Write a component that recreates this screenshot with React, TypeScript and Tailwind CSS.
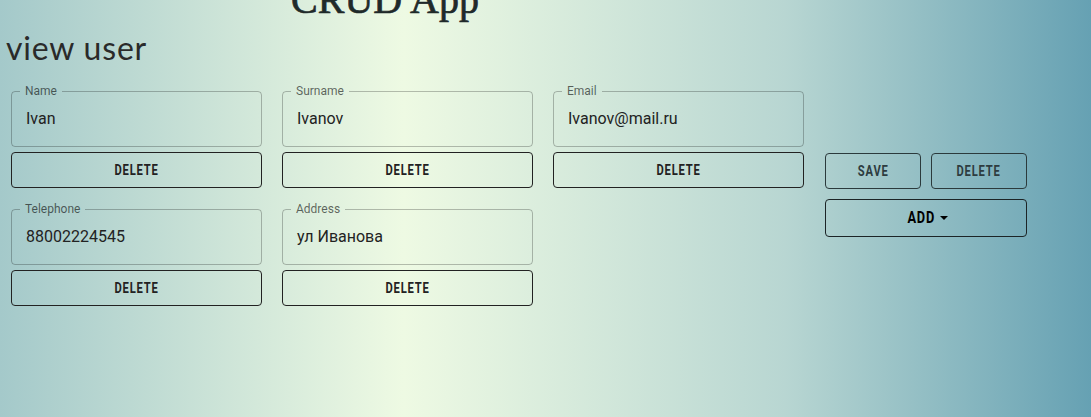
import React from 'react';

interface Field {
  label: string;
  value: string;
}

const rows: Field[][] = [
  [
    { label: 'Name', value: 'Ivan' },
    { label: 'Surname', value: 'Ivanov' },
    { label: 'Email', value: 'Ivanov@mail.ru' },
  ],
  [
    { label: 'Telephone', value: '88002224545' },
    { label: 'Address', value: 'ул Иванова' },
  ],
];

// narrow caps label used on all the outlined buttons
function Caps({ children, className = '' }: { children: React.ReactNode; className?: string }) {
  return (
    <span
      className={`inline-block scale-x-[0.8] font-['Roboto',sans-serif] font-bold tracking-[1px] ${className}`}
    >
      {children}
    </span>
  );
}

function FieldBox({ field }: { field: Field }) {
  return (
    <div className="w-[251px]">
      <div className="relative h-[56px]">
        <fieldset className="absolute inset-x-0 bottom-0 top-[-5px] m-0 rounded border border-black/25 px-2">
          <legend className="px-[5px] font-['Roboto',sans-serif] text-[12px] leading-[11px] text-black/60">
            {field.label}
          </legend>
        </fieldset>
        <div className="relative px-[15px] pt-[16px] font-['Roboto',sans-serif] text-[16px] leading-[23px] text-[#222]">
          {field.value}
        </div>
      </div>
      <button className="mt-[5px] flex h-[36px] w-full items-center justify-center rounded border border-[#222] text-[14px] text-[#222]">
        <Caps>DELETE</Caps>
      </button>
    </div>
  );
}

export default function App() {
  return (
    <div className="min-h-screen w-full overflow-hidden bg-[linear-gradient(90deg,#a4c9ca_0%,#eefae3_37%,#b8d6d2_72%,#66a1b3_100%)]">
      <h1 className="-mt-[20px] w-[770px] text-center font-['Liberation_Serif',serif] text-[40px] leading-[40px] text-[#1f2a2a] [-webkit-text-stroke:0.7px_#1f2a2a]">
        CRUD App
      </h1>
      <h2 className="mt-[9px] px-[6px] font-['Lato',sans-serif] text-[32px] leading-[38px] tracking-[0.8px] text-[#2a2a2a]">
        view user
      </h2>
      <div className="mt-[24px] flex pl-[11px]">
        <div className="flex flex-col gap-[21px]">
          {rows.map((row, i) => (
            <div key={i} className="flex gap-[20px]">
              {row.map((f) => (
                <FieldBox key={f.label} field={f} />
              ))}
            </div>
          ))}
        </div>
        <div className="ml-[21px] mt-[62px] w-[202px]">
          <div className="flex gap-[10px]">
            <button className="flex h-[36px] w-[96px] items-center justify-center rounded border border-[#2b3a3c] text-[14px] text-[#2d3c3f]">
              <Caps>SAVE</Caps>
            </button>
            <button className="flex h-[36px] w-[96px] items-center justify-center rounded border border-[#2b3a3c] text-[14px] text-[#2d3c3f]">
              <Caps>DELETE</Caps>
            </button>
          </div>
          <button className="mt-[10px] flex h-[38px] w-full items-center justify-center gap-[2px] rounded border border-[#1c2426] text-[16px] text-black">
            <Caps className="tracking-[0px]">ADD</Caps>
            <span className="inline-block h-0 w-0 border-x-[4px] border-t-[4px] border-x-transparent border-t-black" />
          </button>
        </div>
      </div>
    </div>
  );
}
